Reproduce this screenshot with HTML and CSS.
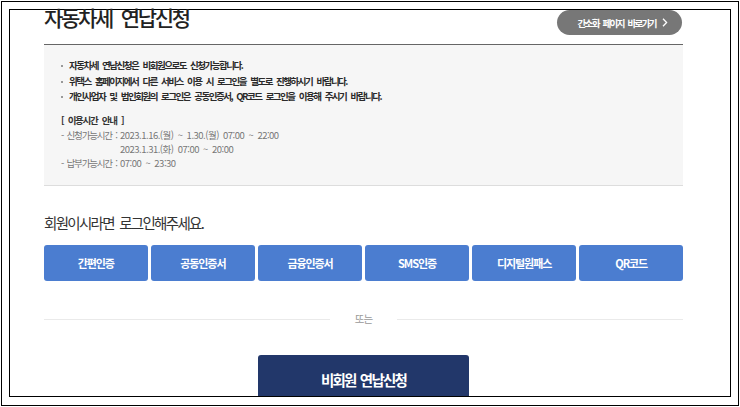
FILE: index.html
```html
<!DOCTYPE html>
<html lang="ko">
<head>
    <meta charset="UTF-8">
    <meta name="viewport" content="width=device-width, initial-scale=1.0">
    <title>자동차세 연납신청</title>
    <link rel="stylesheet" href="styles.css">
</head>
<body>
    <div class="frame">
        <div class="screen">
            <div class="content">
                <div class="head">
                    <h2 class="title">자동차세 연납신청</h2>
                    <a class="quick" href="#">간소화 페이지 바로가기
                        <svg width="6" height="9" viewBox="0 0 6 9"><path d="M1 0.8 L4.6 4.5 L1 8.2" fill="none" stroke="#fff" stroke-width="1.3"/></svg>
                    </a>
                </div>

                <div class="notice">
                    <ul class="notice-list">
                        <li>자동차세 연납신청은 비회원으로도 신청가능합니다.</li>
                        <li>위택스 홈페이지에서 다른 서비스 이용 시 로그인을 별도로 진행하시기 바랍니다.</li>
                        <li>개인사업자 및 법인회원의 로그인은 공동인증서, QR코드 로그인을 이용해 주시기 바랍니다.</li>
                    </ul>
                    <p class="time-title">[ 이용시간 안내 ]</p>
                    <div class="time">
                        <div class="time-row">
                            <span class="time-label">- 신청가능시간 :</span>
                            <span class="time-value">2023.1.16.(월) ~ 1.30.(월) 07:00 ~ 22:00<br>2023.1.31.(화) 07:00 ~ 20:00</span>
                        </div>
                        <div class="time-row">
                            <span class="time-label">- 납부가능시간 :</span>
                            <span class="time-value">07:00 ~ 23:30</span>
                        </div>
                    </div>
                </div>

                <p class="login-msg">회원이시라면 로그인해주세요.</p>
                <div class="login-btns">
                    <button class="btn-login">간편인증</button>
                    <button class="btn-login">공동인증서</button>
                    <button class="btn-login">금융인증서</button>
                    <button class="btn-login">SMS인증</button>
                    <button class="btn-login">디지털원패스</button>
                    <button class="btn-login">QR코드</button>
                </div>

                <div class="or"><span>또는</span></div>

                <div class="guest">
                    <button class="btn-guest">비회원 연납신청</button>
                </div>
            </div>
        </div>
    </div>
</body>
</html>
```

FILE: styles.css
```css
html,body{
    margin: 0;
    padding: 0;
    background: #fff;
}
body{
    padding: 1px;
    font-family: "Noto Sans CJK KR", "Noto Sans", sans-serif;
    color: #333;
}
.frame{
    width: 722px;
    height: 389px;
    border: 1px solid #000;
    padding: 7px;
}
.screen{
    width: 720px;
    height: 386px;
    border: 1px solid #000;
}
.content{
    width: 639px;
    margin-left: 34px;
}

/* 상단 타이틀 */
.head{
    height: 34px;
    display: flex;
    justify-content: space-between;
    align-items: flex-start;
    border-bottom: 1px solid #666;
}
.title{
    margin: -8px 0 0 0;
    font-size: 21px;
    line-height: 30px;
    font-weight: 500;
    letter-spacing: -2.3px;
    word-spacing: 5px;
    color: #222;
}
.quick{
    display: flex;
    align-items: center;
    gap: 6px;
    height: 25px;
    padding: 0 14px 0 20px;
    margin-right: 1px;
    border-radius: 13px;
    background: #777;
    color: #fff;
    font-size: 9.5px;
    font-weight: 700;
    letter-spacing: -1.6px;
    word-spacing: 2.5px;
    text-decoration: none;
}

/* 안내 박스 */
.notice{
    background: #f6f6f6;
    border-bottom: 1px solid #ddd;
    padding: 13px 0 0 17px;
    height: 127px;
}
.notice-list{
    list-style: none;
    margin: 0;
    padding: 0;
}
.notice-list li{
    position: relative;
    padding-left: 8px;
    font-size: 9.5px;
    line-height: 15.5px;
    font-weight: 700;
    letter-spacing: -1.5px;
    word-spacing: 3px;
    color: #2a2a2a;
}
.notice-list li::before{
    content: "";
    position: absolute;
    left: 0;
    top: 7px;
    width: 2px;
    height: 2px;
    background: #999;
}
.time-title{
    margin: 8px 0 0 0;
    font-size: 9.5px;
    line-height: 15px;
    font-weight: 700;
    letter-spacing: -1.3px;
    word-spacing: 3px;
    color: #333;
}
.time{
    font-size: 9.5px;
    line-height: 14.3px;
    letter-spacing: -1.2px;
    word-spacing: 2px;
    color: #777;
}
.time-row{
    display: flex;
}
.time-label{
    width: 59px;
    flex: none;
    white-space: nowrap;
}
.time-value{
    letter-spacing: -0.5px;
}

/* 로그인 */
.login-msg{
    margin: 27px 0 0 0;
    font-size: 14.5px;
    line-height: 20px;
    letter-spacing: -1.7px;
    word-spacing: 3px;
    color: #333;
}
.login-btns{
    margin-top: 12px;
    display: grid;
    grid-template-columns: repeat(6, 1fr);
    gap: 3.5px;
}
.btn-login{
    height: 36px;
    border: none;
    border-radius: 3px;
    background: #4b7dd0;
    color: #fff;
    font-family: inherit;
    font-size: 11px;
    font-weight: 700;
    letter-spacing: -1.1px;
    padding: 0;
}

.or{
    margin-top: 30px;
    display: flex;
    align-items: center;
    gap: 25px;
    font-size: 10.5px;
    line-height: 16px;
    color: #999;
    letter-spacing: -1px;
}
.or::before,
.or::after{
    content: "";
    flex: 1;
    height: 1px;
    background: #eaeaea;
}

.guest{
    margin-top: 28px;
    display: flex;
    justify-content: center;
}
.btn-guest{
    width: 211px;
    height: 41px;
    border: none;
    border-radius: 3px 3px 0 0;
    background: #22376a;
    color: #fff;
    font-family: inherit;
    font-size: 14.5px;
    font-weight: 700;
    letter-spacing: -1.8px;
    word-spacing: 2px;
    padding: 8px 0 0 0;
}
```
